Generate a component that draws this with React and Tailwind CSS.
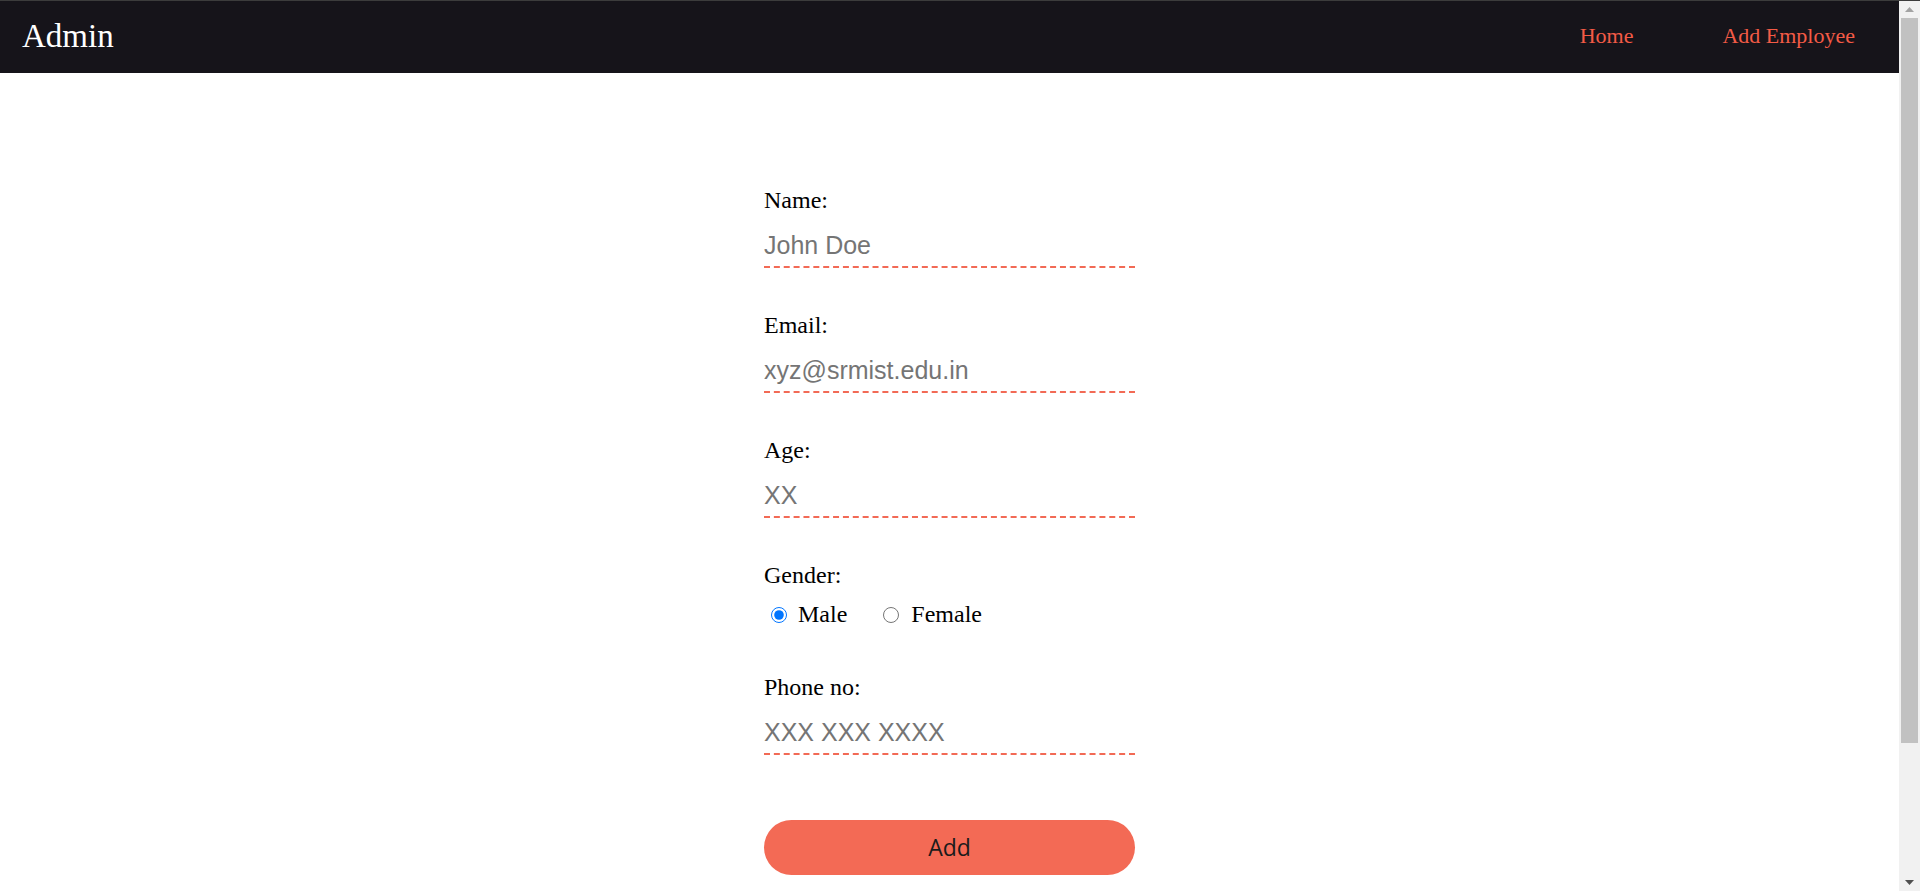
import React, { useState } from 'react';

const serif = { fontFamily: '"Liberation Serif", "Times New Roman", serif' };

function Field({ label, placeholder, type = 'text' }) {
  return (
    <div className="mb-[44px]">
      <label className="block text-[24px] leading-[normal] text-black">{label}</label>
      <input
        type={type}
        placeholder={placeholder}
        className="mt-[10px] block w-full border-0 border-b-2 border-dashed border-[#f26a55] bg-transparent pt-[7px] pb-[6px] text-[25px] leading-[normal] text-black outline-none placeholder:text-[#757575] font-['Liberation_Sans',Arial,sans-serif]"
      />
    </div>
  );
}

// the page's own scroll bar, as the screenshot shows it
function ScrollBar() {
  return (
    <div className="flex w-[21px] shrink-0 flex-col bg-[#f1f1f1]">
      <div className="flex h-[17px] items-center justify-center">
        <svg width="9" height="5" viewBox="0 0 9 5"><path d="M4.5 0L9 5H0z" fill="#a3a3a3" /></svg>
      </div>
      <div className="mx-[2px] h-[725px] bg-[#c1c1c1]" />
      <div className="flex-1" />
      <div className="flex h-[17px] items-center justify-center">
        <svg width="9" height="5" viewBox="0 0 9 5"><path d="M0 0H9L4.5 5z" fill="#505050" /></svg>
      </div>
    </div>
  );
}

function App() {
  const [gender, setGender] = useState('male');

  return (
    <div className="flex h-[891px] flex-col overflow-hidden bg-white" style={serif}>
      <div className="h-px shrink-0 bg-[#3c3c3c]" />
      <div className="flex min-h-0 flex-1">
        <div className="min-w-0 flex-1 overflow-hidden">
          <header className="flex h-[72px] items-center justify-between bg-[#16141a] pl-[22px] pr-[44px]">
            <h1 className="text-[33px] font-normal text-white">Admin</h1>
            <nav className="-mt-[4px] flex items-center gap-[89px] text-[22px] text-[#f45b46]">
              <a href="#" className="hover:underline">Home</a>
              <a href="#" className="hover:underline">Add Employee</a>
            </nav>
          </header>

          <main className="pt-[114px]">
            <form className="mx-auto w-[371px]" onSubmit={e => e.preventDefault()}>
              <Field label="Name:" placeholder="John Doe" />
              <Field label="Email:" placeholder="xyz@srmist.edu.in" type="email" />
              <Field label="Age:" placeholder="XX" />

              <div className="mb-[46px]">
                <label className="block text-[24px] leading-[normal] text-black">Gender:</label>
                <div className="mt-[12px] flex items-center pl-[7px] text-[24px] leading-[normal] text-black">
                  <input
                    type="radio"
                    name="gender"
                    checked={gender === 'male'}
                    onChange={() => setGender('male')}
                    className="m-0 h-4 w-4"
                  />
                  <span className="ml-[11px]">Male</span>
                  <input
                    type="radio"
                    name="gender"
                    checked={gender === 'female'}
                    onChange={() => setGender('female')}
                    className="m-0 ml-[36px] h-4 w-4"
                  />
                  <span className="ml-[12px]">Female</span>
                </div>
              </div>

              <div>
                <label className="block text-[24px] leading-[normal] text-black">Phone no:</label>
                <input
                  type="tel"
                  placeholder="XXX XXX XXXX"
                  className="mt-[10px] block w-full border-0 border-b-2 border-dashed border-[#f26a55] bg-transparent pt-[7px] pb-[6px] text-[25px] leading-[normal] text-black outline-none placeholder:text-[#757575] font-['Liberation_Sans',Arial,sans-serif]"
                />
              </div>

              <button
                type="submit"
                className="mt-[65px] h-[55px] w-full rounded-full bg-[#f36a55] text-[23px] text-[#1b1b1b] font-['Open_Sans','Segoe_UI',sans-serif]"
              >
                Add
              </button>
            </form>
          </main>
        </div>
        <ScrollBar />
      </div>
    </div>
  );
}

export default App;
